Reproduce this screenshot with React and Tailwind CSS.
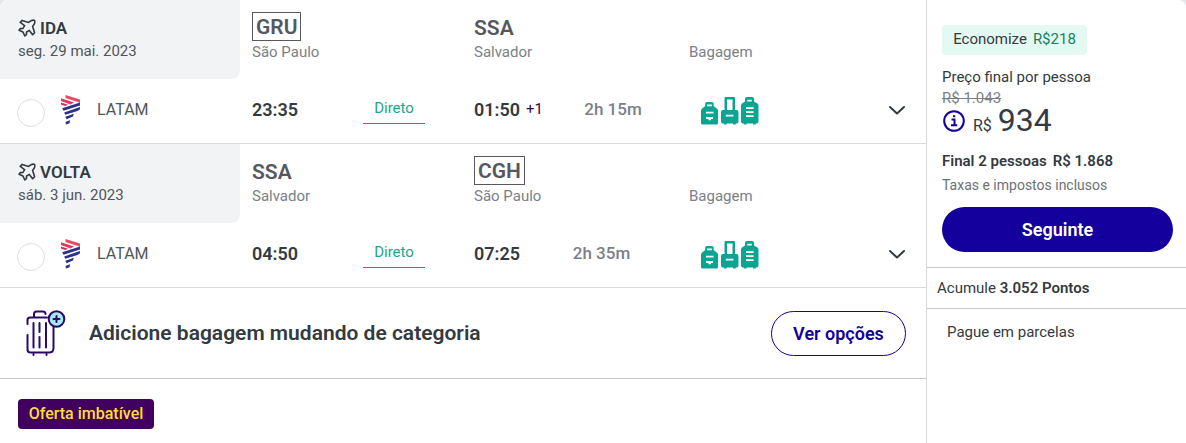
import { useId } from "react";

function PlaneIcon() {
  return (
    <svg viewBox="0 0 18 18" className="size-[18px] shrink-0" fill="none" stroke="#333a40" strokeWidth="1.6" strokeLinejoin="round" aria-hidden="true">
      <path d="M4.200 1.400 10.600 3.400 12.800 1.800Q15.500.600 16.500 1.500 17.400 2.500 16.200 5.200L14.600 7.400 16.600 13.800 14.600 15.800 11.300 11.400 8.600 13 8.400 15.600 6.800 17 5 13 1 11.200 2.400 9.600 5 9.400 6.600 6.700 2.200 3.400Z" />
    </svg>
  );
}

function LatamLogo() {
  return (
    <svg viewBox="0 0 20 30" className="h-[30px] w-5 shrink-0" aria-hidden="true">
      <path d="M4.5 0 19 4.6V7.8L4.5 3Z" fill="#e24a66" />
      <path d="M0 3.2 13 7.6 9.5 9.4 0 6Z" fill="#d93c5c" />
      <path d="M0 7.5 7 9.8 4.5 11 0 9.7Z" fill="#c73561" />
      <path d="M19 7.4V10.6L2.5 15.8 1.2 13.3Z" fill="#2c3288" />
      <path d="M19 12V14.2L16.5 16 4.3 19.8 3.2 17.4Z" fill="#2c3288" />
      <path d="M12.8 18.8 12 21.6 5.5 24.2 4.4 21.8Z" fill="#2c3288" />
      <path d="M9 25.2 8.7 28.2 5 29.6 4.5 27Z" fill="#2c3288" />
    </svg>
  );
}

function LuggageIcons() {
  return (
    <svg viewBox="0 0 58 28" className="h-7 w-[58px]" role="img" aria-label="Bagagem incluída">
      <g fill="#0aa592">
        <path d="M4.2 9V6.6Q4.2 5 5.8 5H11Q12.6 5 12.6 6.6V9L15.8 11.4Q17 12.300 17 13.8V26Q17 27.5 15.5 27.5H1.5Q0 27.5 0 26V13.8Q0 12.300 1.2 11.4Z" />
        <path fillRule="evenodd" d="M23.5 13V1.2Q23.5 0 24.7 0H32.8Q34 0 34 1.2V13H35.4Q37.5 13 37.5 15V24.5Q37.5 26.5 35.5 26.5H34.8V27.6H32V26.5H25.6V27.6H22.8V26.5H22Q20 26.5 20 24.5V15Q20 13 22 13ZM26 2.5V13H31.5V2.5Z" />
        <path d="M44 4.5V2Q44 0 46 0H51Q53 0 53 2V4.5L56.5 6.6Q57.5 7.3 57.5 8.8V24.5Q57.5 26.5 55.5 26.5H54.8V27.6H52V26.5H45.6V27.6H42.8V26.5H42Q40 26.5 40 24.5V8.8Q40 7.3 41 6.6Z" />
      </g>
      <g stroke="#fff" strokeWidth="1.8">
        <path d="M6 8.300H10.8M5 15.7H12.5M5 21H12M7.500 22.300H10M24.8 18.7H32.4M46.3 3.7H50.7M45 11.2H52.6M45 15.2H52.6M45 19.2H52.6" />
      </g>
    </svg>
  );
}

function SuitcasePlusIcon() {
  return (
    <svg viewBox="0 0 42 48" className="h-12 w-[42px] shrink-0" fill="none" stroke="#2b0a66" strokeWidth="2" strokeLinecap="round" aria-hidden="true">
      <path d="M10 8V5Q10 2.5 12.5 2.5H19Q21.5 2.5 21.5 5M3.500 15V11Q3.500 8.500 6 8.500H23M3.500 26V40.500Q3.500 43.500 6.500 43.500H25Q29.500 43.500 29.500 39V18" />
      <path d="M9.500 14V38.500M15.500 14V23M15.500 28V38.500M22 14V38.500M9.500 45V46M22.500 45V46" />
      <circle cx="32.500" cy="10" r="7.800" fill="#a8e8f2" />
      <path d="M32.500 7V13M29.500 10H35.500" />
    </svg>
  );
}

function InfoIcon() {
  return (
    <svg viewBox="0 0 22 22" className="size-[22px]" fill="none" stroke="#14009c" strokeWidth="2" aria-hidden="true">
      <circle cx="11" cy="11" r="9.800" />
      <path d="M8.500 9.500H11.500V15M8 15.200H14.200" />
      <path d="M10 6.200H12.200" />
    </svg>
  );
}

function Airport({ code, city, boxed }) {
  return (
    <div className="pl-3 pt-3">
      <div className={boxed ? "block h-[29px] w-fit border border-[#55595f] px-[3px] text-[21px] leading-[29px] font-semibold text-[#55595f]" : "h-[29px] text-[21px] leading-8 font-semibold text-[#55595f]"}>{code}</div>
      <div className="text-[15px] leading-[22px] text-[#7b8088]">{city}</div>
    </div>
  );
}

function Segment({ title, date, from, to, depart, arrive, plus, duration }) {
  const id = useId();
  return (
    <section className="grid grid-cols-[240px_222px_221px_1fr] grid-rows-[79px_64px] border-b border-[#d9dadc]">
      <div className="rounded-br-lg bg-[#f2f3f5] pt-[17px] pl-[18px]">
        <h2 className="flex items-center gap-1 text-[17px] leading-[22px] font-semibold text-[#333a40]">
          <PlaneIcon />
          {title}
        </h2>
        <p className="text-[15px] leading-6 text-[#50555b]">{date}</p>
      </div>
      <Airport {...from} />
      <Airport {...to} />
      <div className="flex items-end pb-[17px] pl-1.5 text-[15px] leading-5 text-[#7b8088]">Bagagem</div>

      <div className="flex items-center pl-[17px]">
        <input id={id} type="radio" name={title} className="mt-1 size-7 appearance-none rounded-full border border-[#dcdce4] bg-white checked:border-8 checked:border-[#14009c]" />
        <label htmlFor={id} className="flex items-center gap-4 pb-0.5 pl-4 text-base text-[#50555b]">
          <LatamLogo />
          LATAM
        </label>
      </div>
      <div className="flex items-center pb-[3px] pl-3">
        <span className="w-[111px] text-[18px] font-semibold text-[#333a40]">{depart}</span>
        <a href="#direto" className="h-7 w-[62px] border-b border-[#0f9f83] text-center text-[15px] leading-6 text-[#1ca58a]">Direto</a>
      </div>
      <div className="flex items-center pb-[3px] pl-3">
        <span className="text-[18px] font-semibold text-[#333a40]">{arrive}</span>
        {plus && <span className="pl-1.5 text-[15px] text-[#2b0a4a]">{plus}</span>}
        <span className="flex-1 text-center text-[17px] font-medium text-[#7b8088]">{duration}</span>
      </div>
      <div className="flex items-center justify-between pr-5 pl-[18px]">
        <LuggageIcons />
        <button type="button" aria-label="Ver detalhes do voo">
          <svg viewBox="0 0 18 12" className="h-3 w-[18px]" fill="none" stroke="#333a40" strokeWidth="2" strokeLinecap="round" strokeLinejoin="round" aria-hidden="true">
            <path d="M2 2 9 8.500 16 2" />
          </svg>
        </button>
      </div>
    </section>
  );
}

export default function App() {
  return (
    <div className="bg-[#e6e7ea]">
      <main className="flex min-h-screen overflow-hidden rounded-t-lg bg-white font-['Roboto',sans-serif] text-[#333a40]">
        <div className="min-w-0 flex-1">
          <Segment
            title="IDA"
            date="seg. 29 mai. 2023"
            from={{ code: "GRU", city: "São Paulo", boxed: true }}
            to={{ code: "SSA", city: "Salvador" }}
            depart="23:35"
            arrive="01:50"
            plus="+1"
            duration="2h 15m"
          />
          <Segment
            title="VOLTA"
            date="sáb. 3 jun. 2023"
            from={{ code: "SSA", city: "Salvador" }}
            to={{ code: "CGH", city: "São Paulo", boxed: true }}
            depart="04:50"
            arrive="07:25"
            duration="2h 35m"
          />
          <section className="flex h-[91px] items-center border-b border-[#c6c7c9] pr-5 pl-6">
            <SuitcasePlusIcon />
            <h2 className="flex-1 pt-0.5 pl-[23px] text-[21px] font-semibold">Adicione bagagem mudando de categoria</h2>
            <button type="button" className="h-[45px] w-[135px] rounded-full border border-[#14009c] text-[18px] font-semibold text-[#14009c]">
              Ver opções
            </button>
          </section>
          <div className="px-[18px] py-5">
            <span className="inline-flex h-[30px] w-[136px] items-center justify-center rounded bg-[#41005f] text-base font-medium text-[#fbdc3c]">Oferta imbatível</span>
          </div>
        </div>

        <aside className="w-[260px] border-l border-[#d9dadc]">
          <div className="h-[268px] border-b border-[#c6c7c9] pt-[25px] pr-[13px] pl-[15px]">
            <p className="flex h-[30px] w-[145px] items-center justify-center gap-1.5 rounded bg-[#e4f9f2] pb-0.5 text-[15px]">
              Economize <span className="text-[#0f8360]">R$218</span>
            </p>
            <p className="pt-3 text-[15px] leading-5">Preço final por pessoa</p>
            <p className="text-[15px] leading-[22px] text-[#7b8088]">
              <s>R$ 1.043</s>
            </p>
            <div className="flex h-6 items-center">
              <button type="button" aria-label="Informações do preço" className="pl-px">
                <InfoIcon />
              </button>
              <p className="flex items-baseline gap-1.5 pt-1 pl-2">
                <span className="text-base">R$</span>
                <span className="text-[32px] leading-6">934</span>
              </p>
            </div>
            <p className="flex gap-1.5 pt-[17px] text-[15px] leading-[22px] font-semibold">
              <span>Final 2 pessoas</span>
              <span>R$ 1.868</span>
            </p>
            <p className="pt-px text-sm leading-6 text-[#6d7177]">Taxas e impostos inclusos</p>
            <button type="button" className="mt-[10px] h-[45px] w-full rounded-full bg-[#14009c] text-[18px] font-semibold text-white">
              Seguinte
            </button>
          </div>
          <p className="h-[41px] border-b border-[#c6c7c9] pl-[10px] text-[15px] leading-10">
            Acumule <strong className="font-semibold">3.052 Pontos</strong>
          </p>
          <p className="pt-3 pl-5 text-[15px] leading-[22px]">Pague em parcelas</p>
        </aside>
      </main>
    </div>
  );
}
